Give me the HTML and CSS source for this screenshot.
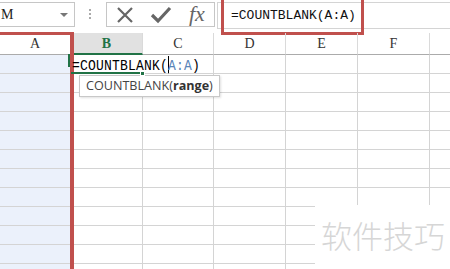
FILE: index.html
```html
<!DOCTYPE html>
<html lang="en">
<head>
    <meta charset="UTF-8">
    <title>COUNTBLANK</title>
    <link rel="stylesheet" href="styles.css">
</head>
<body>
    <div class="window">
        <!-- Name box + formula bar -->
        <div class="toolbar">
            <div class="name-box">
                <span class="name-text">M</span>
                <span class="name-arrow"></span>
            </div>
            <div class="grip"><i></i><i></i><i></i></div>
            <div class="fx-box">
                <svg class="fx-icon" width="20" height="20" viewBox="0 0 20 20">
                    <path d="M3 3 L17 17 M17 3 L3 17" stroke="#666" stroke-width="2.2" fill="none"/>
                </svg>
                <svg class="fx-icon" width="22" height="20" viewBox="0 0 22 20">
                    <path d="M2 10 L8 16 L20 3" stroke="#666" stroke-width="3.2" fill="none"/>
                </svg>
                <span class="fx-label">fx</span>
            </div>
            <div class="formula-bar">=COUNTBLANK(A:A)</div>
            <div class="mark mark-formula"></div>
        </div>

        <!-- Sheet -->
        <div class="sheet">
            <div class="head">A</div>
            <div class="head head-active">B</div>
            <div class="head">C</div>
            <div class="head">D</div>
            <div class="head">E</div>
            <div class="head">F</div>
            <div class="head"></div>

            <div class="cell col-a"></div>
            <div class="cell active">
                <span class="entry">=COUNTBLANK(<span class="caret"></span><span class="ref">A:A</span>)</span>
                <div class="tip">COUNTBLANK(<b>range</b>)</div>
                <span class="handle"></span>
            </div>
            <div class="cell"></div><div class="cell"></div><div class="cell"></div><div class="cell"></div><div class="cell"></div>

            <div class="cell col-a"></div><div class="cell"></div><div class="cell"></div><div class="cell"></div><div class="cell"></div><div class="cell"></div><div class="cell"></div>
            <div class="cell col-a"></div><div class="cell"></div><div class="cell"></div><div class="cell"></div><div class="cell"></div><div class="cell"></div><div class="cell"></div>
            <div class="cell col-a"></div><div class="cell"></div><div class="cell"></div><div class="cell"></div><div class="cell"></div><div class="cell"></div><div class="cell"></div>
            <div class="cell col-a"></div><div class="cell"></div><div class="cell"></div><div class="cell"></div><div class="cell"></div><div class="cell"></div><div class="cell"></div>
            <div class="cell col-a"></div><div class="cell"></div><div class="cell"></div><div class="cell"></div><div class="cell"></div><div class="cell"></div><div class="cell"></div>
            <div class="cell col-a"></div><div class="cell"></div><div class="cell"></div><div class="cell"></div><div class="cell"></div><div class="cell"></div><div class="cell"></div>
            <div class="cell col-a"></div><div class="cell"></div><div class="cell"></div><div class="cell"></div><div class="cell"></div><div class="cell"></div><div class="cell"></div>
            <div class="cell col-a"></div><div class="cell"></div><div class="cell"></div><div class="cell"></div><div class="cell"></div><div class="cell"></div><div class="cell"></div>
            <div class="cell col-a"></div><div class="cell"></div><div class="cell"></div><div class="cell"></div><div class="cell"></div><div class="cell"></div><div class="cell"></div>
            <div class="cell col-a"></div><div class="cell"></div><div class="cell"></div><div class="cell"></div><div class="cell"></div><div class="cell"></div><div class="cell"></div>
            <div class="cell col-a"></div><div class="cell"></div><div class="cell"></div><div class="cell"></div><div class="cell"></div><div class="cell"></div><div class="cell"></div>

            <div class="mark mark-column"></div>
        </div>

        <div class="watermark">软件技巧</div>
    </div>
</body>
</html>
```

FILE: styles.css
```css
* {
    margin: 0;
    padding: 0;
    box-sizing: border-box;
}

body {
    width: 450px;
    height: 269px;
    overflow: hidden;
    background: #fff;
    font-family: "Liberation Mono", monospace;
    color: #222;
}

.window {
    position: relative;
    width: 450px;
    height: 269px;
    overflow: hidden;
}

/* Toolbar row */
.toolbar {
    position: relative;
    display: flex;
    align-items: flex-start;
    height: 33px;
    padding-top: 2px;
}

.name-box {
    display: flex;
    align-items: center;
    justify-content: space-between;
    width: 76px;
    height: 25px;
    margin-left: -1px;
    padding: 0 6px 0 1px;
    border: 1px solid #c6c6c6;
    font-family: "Liberation Serif", serif;
    font-size: 14px;
}

.name-arrow {
    width: 0;
    height: 0;
    border-left: 4px solid transparent;
    border-right: 4px solid transparent;
    border-top: 4px solid #777;
}

.grip {
    display: flex;
    flex-direction: column;
    gap: 2px;
    width: 31px;
    padding: 7px 0 0 14px;
}

.grip i {
    width: 2px;
    height: 2px;
    background: #aaa;
}

.fx-box {
    display: flex;
    align-items: center;
    gap: 15px;
    width: 109px;
    height: 25px;
    padding-left: 8px;
    border: 1px solid #c6c6c6;
}

.fx-label {
    font-family: "Liberation Serif", serif;
    font-style: italic;
    font-size: 22px;
    color: #666;
    margin-left: 2px;
    margin-top: -2px;
}

.formula-bar {
    flex: 1;
    height: 27px;
    margin-left: 2px;
    padding: 5px 0 0 13px;
    border: 1px solid #d4d4d4;
    border-right: none;
    font-size: 13px;
    color: #111;
}

/* red annotation frames */
.mark {
    position: absolute;
    border: 3px solid #c0504d;
    pointer-events: none;
}

.mark-formula {
    left: 221px;
    top: -4px;
    width: 143px;
    height: 39px;
}

.mark-column {
    left: -4px;
    top: -1px;
    width: 78px;
    height: 260px;
    border-width: 3px 4px 0 3px;
}

/* Sheet grid */
.sheet {
    position: relative;
    display: grid;
    grid-template-columns: 71px 72px 71px 72px 72px 72px 40px;
    grid-auto-rows: 19px;
    grid-template-rows: 22px;
}

.head {
    display: flex;
    align-items: center;
    justify-content: center;
    border-right: 1px solid #dadada;
    border-bottom: 1px solid #ababab;
    font-family: "Liberation Serif", serif;
    font-size: 14px;
    color: #333;
    padding-top: 1px;
}

.head-active {
    background: #e1e1e1;
    color: #217346;
    font-weight: bold;
    border-bottom: 2px solid #217346;
}

.cell {
    border-right: 1px solid #d4d4d4;
    border-bottom: 1px solid #d4d4d4;
}

.col-a {
    background: #ebf1fb;
}

.cell.active {
    position: relative;
    border-right-color: transparent;
    border-bottom: 2px solid #217346;
    white-space: nowrap;
    z-index: 2;
}

.cell.active::before {
    content: "";
    position: absolute;
    left: -3px;
    top: -1px;
    width: 2px;
    height: 13px;
    background: #217346;
}

.entry {
    position: absolute;
    left: 1px;
    top: 1px;
    font-size: 13px;
    line-height: 16px;
    color: #000;
    letter-spacing: 0.2px;
    transform: scaleY(1.15);
    transform-origin: left top;
}

.ref {
    color: #5a84b8;
}

.caret {
    display: inline-block;
    width: 1px;
    height: 15px;
    margin: 0 -1px 0 0;
    vertical-align: -3px;
    background: #000;
}

.handle {
    position: absolute;
    right: -3px;
    bottom: -4px;
    width: 5px;
    height: 5px;
    background: #217346;
    border: 1px solid #fff;
}

.tip {
    position: absolute;
    left: 8px;
    top: 20px;
    height: 22px;
    padding: 2px 6px 0 6px;
    background: #fff;
    border: 1px solid #c8c8c8;
    box-shadow: 1px 1px 2px rgba(0, 0, 0, 0.12);
    font-family: "Open Sans", sans-serif;
    font-size: 12.6px;
    line-height: 16px;
    color: #444;
}

.tip b {
    color: #333;
}

.watermark {
    position: absolute;
    left: 315px;
    top: 205px;
    width: 140px;
    height: 70px;
    padding: 7px 0 0 6px;
    background: #fff;
    font-family: "Noto Sans CJK SC", sans-serif;
    font-size: 31px;
    font-weight: 300;
    color: #d6d6d6;
}
```
